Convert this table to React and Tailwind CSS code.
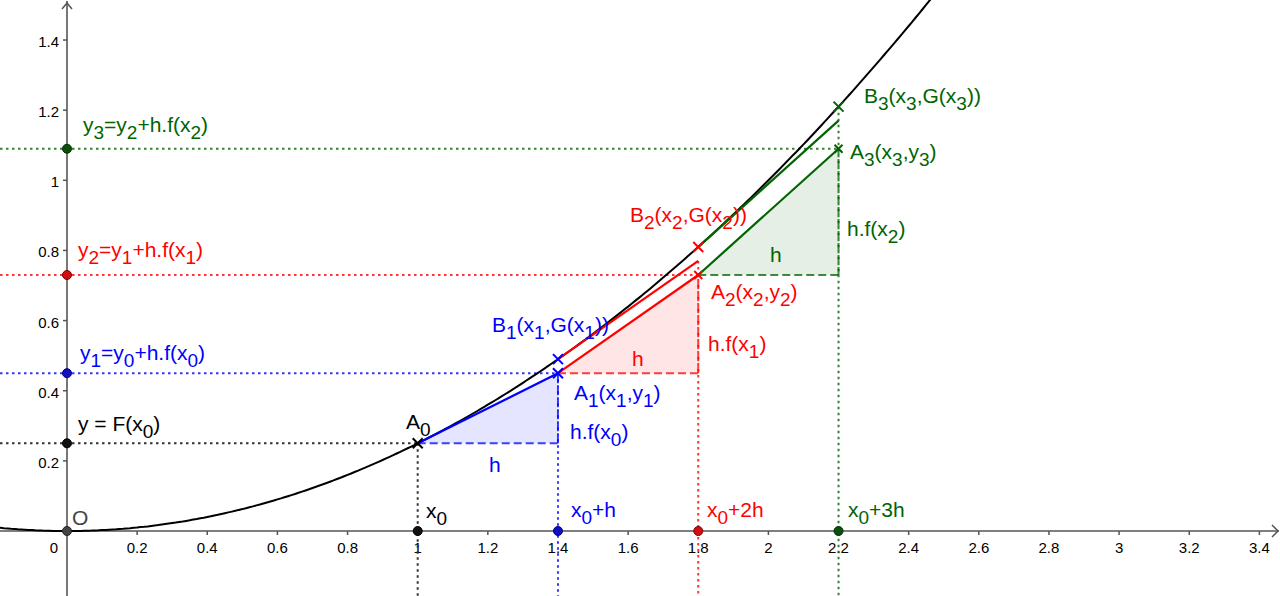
import React from "react";

const S = 350.7;
const OX = 67;
const OY = 531;
const X = (x) => OX + x * S;
const Y = (y) => OY - y * S;

const BLUE = "#0000ff";
const RED = "#ff0000";
const GREEN = "#006400";
const FONT = '"Liberation Sans", Arial, sans-serif';

// "y_3=y_2" -> y, sub 3, =y, sub 2
const Label = ({ x, y, color, text, size = 21 }) => {
  const parts = [];
  let buf = "";
  for (let i = 0; i < text.length; i++) {
    if (text[i] === "_") {
      if (buf) parts.push({ t: buf });
      buf = "";
      parts.push({ t: text[i + 1], sub: true });
      i++;
    } else buf += text[i];
  }
  if (buf) parts.push({ t: buf });

  let low = false;
  return (
    <text x={x} y={y} fill={color} fontSize={size} fontFamily={FONT}>
      {parts.map((p, i) => {
        let dy = 0;
        if (p.sub && !low) dy = 7;
        if (!p.sub && low) dy = -7;
        low = !!p.sub;
        return (
          <tspan key={i} dy={dy} fontSize={p.sub ? size - 2 : size}>
            {p.t}
          </tspan>
        );
      })}
    </text>
  );
};

const Cross = ({ x, y, color, r = 5 }) => (
  <g stroke={color} strokeWidth="2">
    <line x1={X(x) - r} y1={Y(y) - r} x2={X(x) + r} y2={Y(y) + r} />
    <line x1={X(x) - r} y1={Y(y) + r} x2={X(x) + r} y2={Y(y) - r} />
  </g>
);

const Dot = ({ x, y, fill, stroke }) => (
  <circle cx={X(x)} cy={Y(y)} r="4.5" fill={fill} stroke={stroke} strokeWidth="1" />
);

const curve = () => {
  const pts = [];
  for (let x = -0.2; x <= 2.48; x += 0.01) pts.push(`${X(x).toFixed(1)},${Y((x * x) / 4).toFixed(1)}`);
  return pts.join(" ");
};

const fmt = (v) => {
  const s = v.toFixed(1);
  return s.endsWith(".0") ? s.slice(0, -2) : s;
};

const DOT = "2.5 3.5";
const DASH = "8 4";

const App = () => {
  const xTicks = Array.from({ length: 17 }, (_, i) => (i + 1) * 0.2);
  const yTicks = Array.from({ length: 7 }, (_, i) => (i + 1) * 0.2);

  return (
    <div className="w-[1280px] h-[596px] bg-white overflow-hidden">
      <svg width="1280" height="596" viewBox="0 0 1280 596" className="block">
        {/* axes */}
        <g stroke="#555" strokeWidth="1.5" fill="none">
          <line x1="0" y1={OY} x2="1279" y2={OY} />
          <line x1={OX} y1="1" x2={OX} y2="596" stroke="#777" strokeWidth="2" />
          <polyline points={`${OX - 5},9 ${OX},3 ${OX + 5},9`} />
          <polyline points={`1272,${OY - 6} 1278,${OY} 1272,${OY + 6}`} />
          {xTicks.map((t) => (
            <line key={t} x1={X(t)} y1={OY} x2={X(t)} y2={OY + 4} />
          ))}
          {yTicks.map((t) => (
            <line key={t} x1={OX - 4} y1={Y(t)} x2={OX} y2={Y(t)} />
          ))}
        </g>
        <g fill="#000" fontSize="15" fontFamily={FONT}>
          {xTicks.map((t) => (
            <text key={t} x={X(t)} y="553" textAnchor="middle">
              {fmt(t)}
            </text>
          ))}
          <text x="54" y="553" textAnchor="middle">0</text>
          {yTicks.map((t) => (
            <text key={t} x="59" y={Y(t) + 7} textAnchor="end">
              {fmt(t)}
            </text>
          ))}
        </g>

        {/* triangles */}
        <polygon points={`${X(1)},${Y(0.25)} ${X(1.4)},${Y(0.25)} ${X(1.4)},${Y(0.45)}`} fill={BLUE} fillOpacity="0.1" />
        <polygon points={`${X(1.4)},${Y(0.45)} ${X(1.8)},${Y(0.45)} ${X(1.8)},${Y(0.73)}`} fill={RED} fillOpacity="0.1" />
        <polygon points={`${X(1.8)},${Y(0.73)} ${X(2.2)},${Y(0.73)} ${X(2.2)},${Y(1.09)}`} fill={GREEN} fillOpacity="0.1" />

        {/* dotted guides */}
        <g strokeWidth="2" strokeDasharray={DOT} fill="none">
          <line x1="0" y1={Y(0.25)} x2={X(1)} y2={Y(0.25)} stroke="#333" />
          <line x1="0" y1={Y(0.45)} x2={X(1.4)} y2={Y(0.45)} stroke={BLUE} strokeOpacity="0.8" />
          <line x1="0" y1={Y(0.73)} x2={X(1.8)} y2={Y(0.73)} stroke={RED} strokeOpacity="0.8" />
          <line x1="0" y1={Y(1.09)} x2={X(2.2)} y2={Y(1.09)} stroke={GREEN} strokeOpacity="0.8" />
          <line x1={X(1)} y1={Y(0.25)} x2={X(1)} y2="596" stroke="#333" />
          <line x1={X(1.4)} y1={Y(0.45)} x2={X(1.4)} y2="596" stroke={BLUE} strokeOpacity="0.8" />
          <line x1={X(1.8)} y1={Y(0.77)} x2={X(1.8)} y2="596" stroke={RED} strokeOpacity="0.8" />
          <line x1={X(2.2)} y1={Y(1.21)} x2={X(2.2)} y2="596" stroke={GREEN} strokeOpacity="0.8" />
        </g>

        {/* dashed triangle sides */}
        <g strokeWidth="2" strokeDasharray={DASH} fill="none">
          <line x1={X(1)} y1={Y(0.25)} x2={X(1.4)} y2={Y(0.25)} stroke={BLUE} strokeOpacity="0.75" />
          <line x1={X(1.4)} y1={Y(0.25)} x2={X(1.4)} y2={Y(0.45)} stroke={BLUE} strokeOpacity="0.75" />
          <line x1={X(1.4)} y1={Y(0.45)} x2={X(1.8)} y2={Y(0.45)} stroke={RED} strokeOpacity="0.75" />
          <line x1={X(1.8)} y1={Y(0.45)} x2={X(1.8)} y2={Y(0.73)} stroke={RED} strokeOpacity="0.75" />
          <line x1={X(1.8)} y1={Y(0.73)} x2={X(2.2)} y2={Y(0.73)} stroke={GREEN} strokeOpacity="0.75" />
          <line x1={X(2.2)} y1={Y(0.73)} x2={X(2.2)} y2={Y(1.09)} stroke={GREEN} strokeOpacity="0.75" />
        </g>

        {/* curve F(x) = x²/4 */}
        <polyline points={curve()} fill="none" stroke="#000" strokeWidth="2" />

        {/* Euler segments */}
        <g strokeWidth="2.2">
          <line x1={X(1)} y1={Y(0.25)} x2={X(1.4)} y2={Y(0.45)} stroke={BLUE} />
          <line x1={X(1.4)} y1={Y(0.45)} x2={X(1.8)} y2={Y(0.73)} stroke={RED} />
          <line x1={X(1.4)} y1={Y(0.49)} x2={X(1.8)} y2={Y(0.77)} stroke={RED} />
          <line x1={X(1.8)} y1={Y(0.73)} x2={X(2.2)} y2={Y(1.09)} stroke={GREEN} />
          <line x1={X(1.8)} y1={Y(0.81)} x2={X(2.2)} y2={Y(1.17)} stroke={GREEN} />
        </g>

        {/* crosses */}
        <Cross x={1} y={0.25} color="#000" />
        <Cross x={1.4} y={0.45} color={BLUE} />
        <Cross x={1.4} y={0.49} color={BLUE} />
        <Cross x={1.8} y={0.73} color={RED} r={4} />
        <Cross x={1.8} y={0.81} color={RED} />
        <Cross x={2.2} y={1.09} color={GREEN} r={4} />
        <Cross x={2.2} y={1.21} color={GREEN} />

        {/* points */}
        <Dot x={0} y={0.25} fill="#111" stroke="#000" />
        <Dot x={0} y={0.45} fill="#1010c0" stroke="#000080" />
        <Dot x={0} y={0.73} fill="#d01010" stroke="#800000" />
        <Dot x={0} y={1.09} fill="#0b4f0b" stroke="#003000" />
        <Dot x={1} y={0} fill="#111" stroke="#000" />
        <Dot x={1.4} y={0} fill="#1010c0" stroke="#000080" />
        <Dot x={1.8} y={0} fill="#d01010" stroke="#800000" />
        <Dot x={2.2} y={0} fill="#0b4f0b" stroke="#003000" />
        <Dot x={0} y={0} fill="#444" stroke="#222" />

        {/* labels */}
        <Label x={83} y={132} color={GREEN} text="y_3=y_2+h.f(x_2)" />
        <Label x={78} y={257} color={RED} text="y_2=y_1+h.f(x_1)" />
        <Label x={80} y={360} color={BLUE} text="y_1=y_0+h.f(x_0)" />
        <Label x={78} y={431} color="#000" text="y = F(x_0)" />
        <Label x={72} y={525} color="#444" text="O" />
        <Label x={426} y={518} color="#000" text="x_0" />
        <Label x={406} y={429} color="#000" text="A_0" />
        <Label x={492} y={332} color={BLUE} text="B_1(x_1,G(x_1))" />
        <Label x={574} y={400} color={BLUE} text="A_1(x_1,y_1)" />
        <Label x={570} y={439} color={BLUE} text="h.f(x_0)" />
        <Label x={489} y={472} color={BLUE} text="h" />
        <Label x={632} y={366} color={RED} text="h" />
        <Label x={708} y={351} color={RED} text="h.f(x_1)" />
        <Label x={711} y={299} color={RED} text="A_2(x_2,y_2)" />
        <Label x={630} y={222} color={RED} text="B_2(x_2,G(x_2))" />
        <Label x={770} y={262} color={GREEN} text="h" />
        <Label x={847} y={236} color={GREEN} text="h.f(x_2)" />
        <Label x={850} y={159} color={GREEN} text="A_3(x_3,y_3)" />
        <Label x={864} y={103} color={GREEN} text="B_3(x_3,G(x_3))" />
        <Label x={571} y={517} color={BLUE} text="x_0+h" />
        <Label x={707} y={517} color={RED} text="x_0+2h" />
        <Label x={848} y={517} color={GREEN} text="x_0+3h" />
      </svg>
    </div>
  );
};

export default App;
